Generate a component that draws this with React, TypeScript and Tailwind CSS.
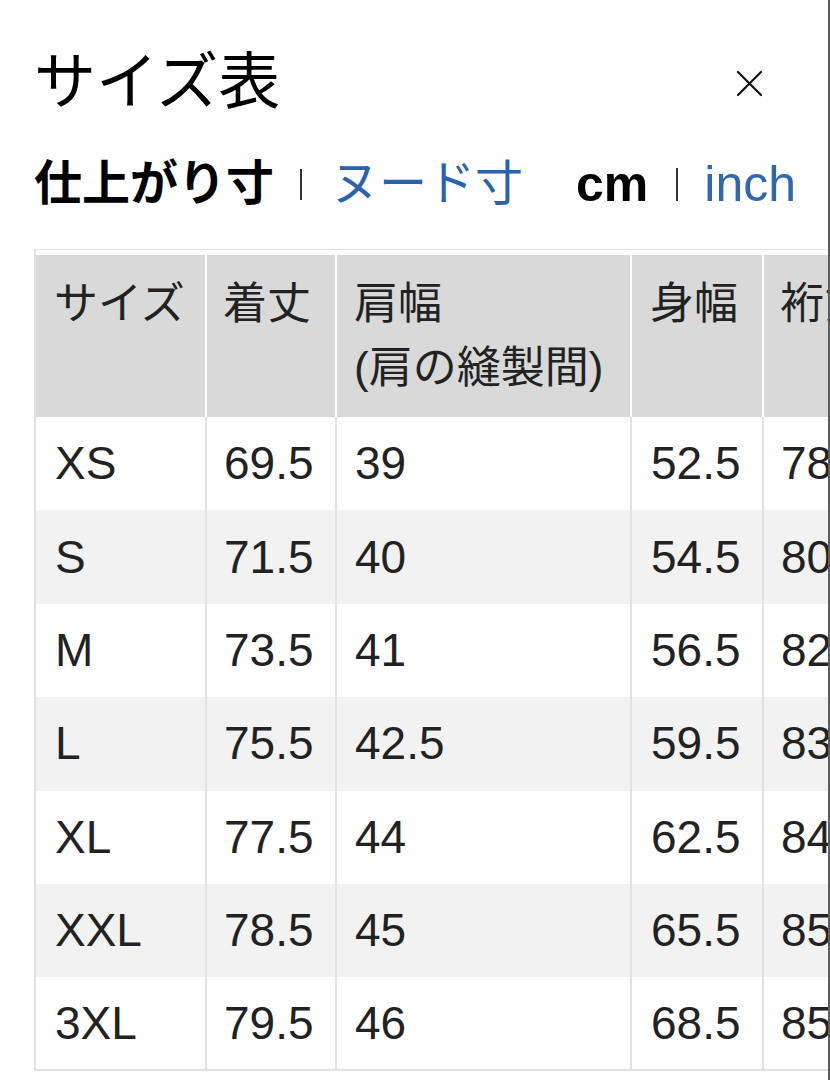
import React from "react";

const rows: [string, string, string, string, string][] = [
  ["XS", "69.5", "39", "52.5", "78"],
  ["S", "71.5", "40", "54.5", "80"],
  ["M", "73.5", "41", "56.5", "82"],
  ["L", "75.5", "42.5", "59.5", "83"],
  ["XL", "77.5", "44", "62.5", "84"],
  ["XXL", "78.5", "45", "65.5", "85"],
  ["3XL", "79.5", "46", "68.5", "85"],
];

const FONT = {
  fontFamily: '"Liberation Sans", "Noto Sans CJK JP", sans-serif',
};

export default function App() {
  return (
    <div className="flex w-[830px] h-[1080px] bg-white overflow-hidden text-black" style={FONT}>
      <div className="w-[828px] h-full overflow-hidden pl-[34px]">
        <div className="flex items-center justify-between pt-[52px]">
          <h1 className="text-[62px] leading-[62px] font-normal">サイズ表</h1>
          <button className="mr-[65px] w-[27px] h-[27px] flex items-center justify-center" aria-label="close">
            <svg width="27" height="27" viewBox="0 0 27 27">
              <path d="M2 2 L25 25 M25 2 L2 25" stroke="#111" strokeWidth="2.2" strokeLinecap="round" />
            </svg>
          </button>
        </div>

        <div className="flex items-center mt-[45px] h-[50px]">
          <span className="text-[48px] leading-[50px] font-bold">仕上がり寸</span>
          <span className="ml-[26px] w-[2px] h-[31px] bg-[#333]" />
          <span className="ml-[29px] text-[48px] leading-[50px] text-[#2a62ad]">ヌード寸</span>
          <span className="ml-[53px] text-[50px] leading-[50px] font-bold">cm</span>
          <span className="ml-[28px] w-[2px] h-[33px] bg-[#333]" />
          <span className="ml-[26px] text-[50px] leading-[50px] text-[#2f68b0]">inch</span>
        </div>

        <div className="mt-[40px] w-[1000px] border-t border-[#e6e6e6] pt-[5px] border-l-2 border-l-[#e2e2e2]">
          <div className="grid grid-cols-[171px_130px_295px_132px_140px] bg-[#d9d9d9] text-[44px] leading-[64px] text-[#222]">
            <div className="px-[18px] py-[17px] border-r-2 border-white">サイズ</div>
            <div className="px-[16px] py-[17px] border-r-2 border-white">着丈</div>
            <div className="px-[17px] py-[17px] border-r-2 border-white">
              <div>肩幅</div>
              <div>(肩の縫製間)</div>
            </div>
            <div className="px-[18px] py-[17px] border-r-2 border-white">身幅</div>
            <div className="px-[16px] py-[17px] border-r-2 border-white whitespace-nowrap">裄丈</div>
          </div>
          {rows.map((r, i) => (
            <div
              key={r[0]}
              className={`grid grid-cols-[171px_130px_295px_132px_140px] h-[93.4px] items-stretch text-[46px] text-[#222] ${
                i % 2 === 1 ? "bg-[#f2f2f2]" : "bg-white"
              } ${i === rows.length - 1 ? "border-b-2 border-[#e2e2e2]" : ""}`}
            >
              {r.map((c, j) => (
                <div
                  key={j}
                  className={`flex items-center border-r-2 border-[#e2e2e2] ${
                    j === 0 ? "pl-[19px]" : j === 1 ? "pl-[17px]" : j === 2 ? "pl-[18px]" : j === 3 ? "pl-[19px]" : "pl-[17px]"
                  }`}
                >
                  {c}
                </div>
              ))}
            </div>
          ))}
        </div>
      </div>
      <div className="w-[2px] h-full bg-[#5e5e5e]" />
    </div>
  );
}
